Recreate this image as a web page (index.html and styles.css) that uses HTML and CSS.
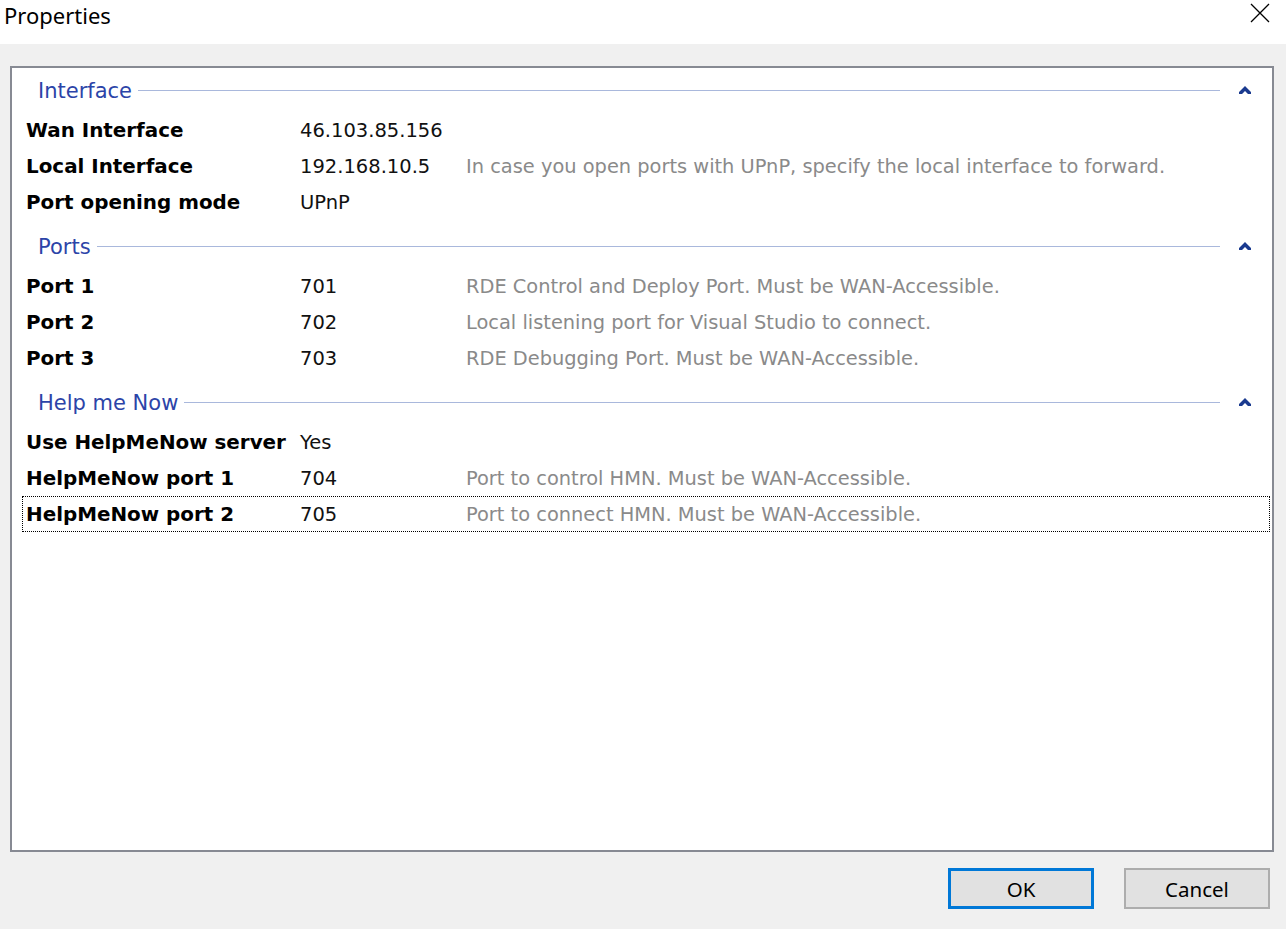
FILE: index.html
```html
<!DOCTYPE html>
<html>
<head>
<meta charset="utf-8">
<link rel="stylesheet" href="styles.css">
</head>
<body>
<div class="window">
  <div class="titlebar">
    <span class="title">Properties</span>
    <svg class="close" width="20" height="20" viewBox="0 0 20 20"><path d="M1 1 L19 19 M19 1 L1 19" stroke="#000" stroke-width="1.3" fill="none"/></svg>
  </div>
  <div class="body">
    <div class="panel">
      <div class="section">
        <div class="header"><span class="htext">Interface</span><span class="hline"></span><svg class="chev" width="14" height="10" viewBox="0 0 14 10"><path d="M7 1 L13 7 L13 9 L10 9 L7 6 L4 9 L1 9 L1 7 Z" fill="#1a3a8f"/></svg></div>
        <div class="row"><span class="lbl">Wan Interface</span><span class="val">46.103.85.156</span><span class="desc"></span></div>
        <div class="row"><span class="lbl">Local Interface</span><span class="val">192.168.10.5</span><span class="desc">In case you open ports with UPnP, specify the local interface to forward.</span></div>
        <div class="row"><span class="lbl">Port opening mode</span><span class="val">UPnP</span><span class="desc"></span></div>
      </div>
      <div class="section">
        <div class="header"><span class="htext">Ports</span><span class="hline"></span><svg class="chev" width="14" height="10" viewBox="0 0 14 10"><path d="M7 1 L13 7 L13 9 L10 9 L7 6 L4 9 L1 9 L1 7 Z" fill="#1a3a8f"/></svg></div>
        <div class="row"><span class="lbl">Port 1</span><span class="val">701</span><span class="desc">RDE Control and Deploy Port. Must be WAN-Accessible.</span></div>
        <div class="row"><span class="lbl">Port 2</span><span class="val">702</span><span class="desc">Local listening port for Visual Studio to connect.</span></div>
        <div class="row"><span class="lbl">Port 3</span><span class="val">703</span><span class="desc">RDE Debugging Port. Must be WAN-Accessible.</span></div>
      </div>
      <div class="section">
        <div class="header"><span class="htext">Help me Now</span><span class="hline"></span><svg class="chev" width="14" height="10" viewBox="0 0 14 10"><path d="M7 1 L13 7 L13 9 L10 9 L7 6 L4 9 L1 9 L1 7 Z" fill="#1a3a8f"/></svg></div>
        <div class="row"><span class="lbl">Use HelpMeNow server</span><span class="val">Yes</span><span class="desc"></span></div>
        <div class="row"><span class="lbl">HelpMeNow port 1</span><span class="val">704</span><span class="desc">Port to control HMN. Must be WAN-Accessible.</span></div>
        <div class="row focused"><span class="lbl">HelpMeNow port 2</span><span class="val">705</span><span class="desc">Port to connect HMN. Must be WAN-Accessible.</span></div>
      </div>
    </div>
    <div class="footer">
      <button class="btn primary">OK</button>
      <button class="btn">Cancel</button>
    </div>
  </div>
</div>
</body>
</html>
```
FILE: styles.css
```css
html, body {
  margin: 0;
  padding: 0;
  height: 100%;
}
body {
  background: #f0f0f0;
  font-family: "DejaVu Sans", "Liberation Sans", sans-serif;
}
.window {
  display: flex;
  flex-direction: column;
  height: 929px;
}
.titlebar {
  height: 44px;
  background: #ffffff;
  display: flex;
  align-items: flex-start;
  justify-content: space-between;
}
.title {
  font-family: "Noto Sans", "Open Sans", sans-serif;
  font-size: 22px;
  color: #000;
  margin-left: 4px;
  margin-top: 0;
  line-height: 30px;
}
.close {
  margin-top: 3px;
  margin-right: 16px;
}
.body {
  flex: 1;
  display: flex;
  flex-direction: column;
  padding: 22px 12px 0 10px;
}
.panel {
  height: 782px;
  border: 2px solid #878a93;
  background: #ffffff;
}
.section {
  margin-top: 4px;
}
.section:first-child {
  margin-top: 0;
}
.header {
  height: 44px;
  display: flex;
  align-items: center;
  margin-left: 26px;
  margin-right: 20px;
  padding-top: 1px;
  box-sizing: border-box;
}
.htext {
  font-size: 21px;
  color: #2c44a8;
  line-height: 24px;
}
.hline {
  flex: 1;
  height: 1px;
  background: #a9b8dc;
  margin-left: 6px;
  margin-right: 18px;
}
.chev {
  display: block;
  margin-top: -2px;
}
.row {
  height: 36px;
  display: flex;
  align-items: center;
  margin-left: 10px;
  margin-right: 2px;
  padding-left: 3px;
  padding-top: 2px;
  box-sizing: border-box;
  border: 1px solid transparent;
  line-height: 24px;
}
.row.focused {
  border: 1px dotted #000;
}
.lbl {
  width: 274px;
  flex: none;
  font-weight: bold;
  font-size: 19.9px;
  color: #000;
}
.val {
  width: 166px;
  flex: none;
  font-size: 19.5px;
  color: #111;
}
.desc {
  font-size: 19.4px;
  color: #8a8a8a;
  white-space: nowrap;
}
.footer {
  display: flex;
  justify-content: flex-end;
  gap: 30px;
  padding-top: 16px;
  padding-right: 4px;
}
.btn {
  width: 146px;
  height: 41px;
  background: #e1e1e1;
  border: 2px solid #adadad;
  font-family: "Noto Sans", "Open Sans", sans-serif;
  font-size: 20.5px;
  color: #000;
  padding: 0;
  line-height: 24px;
}
.btn.primary {
  border: 3px solid #0078d7;
}
```
